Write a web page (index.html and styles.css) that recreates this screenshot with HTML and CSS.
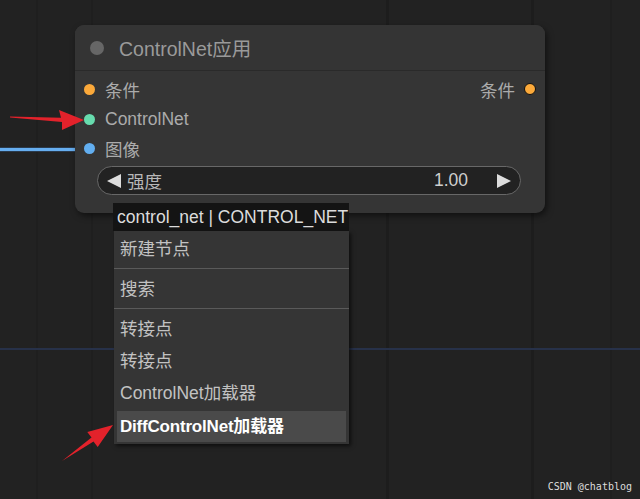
FILE: index.html
```html
<!DOCTYPE html>
<html>
<head>
<meta charset="utf-8">
<link rel="stylesheet" href="styles.css">
</head>
<body>
<div class="canvas">
  <div class="hline"></div>
  <div class="wire"></div>
  <div class="node">
    <div class="node-title">
      <span class="title-dot"></span>
      <span class="title-text">ControlNet应用</span>
    </div>
    <div class="node-body">
      <div class="slot-row">
        <div class="slot"><span class="dot dot-orange"></span><span>条件</span></div>
        <div class="slot slot-out"><span>条件</span><span class="dot dot-orange dot-out"></span></div>
      </div>
      <div class="slot-row">
        <div class="slot"><span class="dot dot-green"></span><span>ControlNet</span></div>
      </div>
      <div class="slot-row">
        <div class="slot"><span class="dot dot-blue"></span><span>图像</span></div>
      </div>
      <div class="widget">
        <span class="arrow-left"></span>
        <span class="w-label">强度</span>
        <span class="w-value">1.00</span>
        <span class="arrow-right"></span>
      </div>
    </div>
  </div>
  <div class="menu">
    <div class="menu-title">control_net | CONTROL_NET</div>
    <div class="menu-body">
      <div class="menu-item">新建节点</div>
      <div class="menu-sep"></div>
      <div class="menu-item">搜索</div>
      <div class="menu-sep"></div>
      <div class="menu-item">转接点</div>
      <div class="menu-item">转接点</div>
      <div class="menu-item">ControlNet加载器</div>
      <div class="menu-item menu-item-hl">DiffControlNet加载器</div>
    </div>
  </div>
  <svg class="arrows" width="640" height="499" viewBox="0 0 640 499">
    <polygon points="10,116.6 61,117.8 59,110 84,120 62,130 62,122 10,117.6" fill="#e3222b"/>
    <polygon points="62,461 93.5,441.5 97.7,446.9 113,425 87.3,432.1 91.5,437.5" fill="#e3222b"/>
  </svg>
  <div class="watermark">CSDN @chatblog</div>
</div>
</body>
</html>
```

FILE: styles.css
```css
html, body {
  margin: 0;
  padding: 0;
  background: #212121;
}

.canvas {
  position: relative;
  width: 640px;
  height: 499px;
  overflow: hidden;
  font-family: "Liberation Sans", "Noto Sans CJK SC", sans-serif;
  background-color: #222222;
  background-image:
    linear-gradient(to right,
      transparent 36px, #1f1f1f 36px, #1f1f1f 38px, transparent 38px,
      transparent 91px, #1f1f1f 91px, #1f1f1f 93px, transparent 93px,
      transparent 386px, #1d1d1d 386px, #1d1d1d 389px, transparent 389px,
      transparent 531px, #1d1d1d 531px, #1d1d1d 534px, transparent 534px,
      transparent 610px, #1f1f1f 610px, #1f1f1f 612px, transparent 612px);
}

.hline {
  position: absolute;
  left: 0;
  top: 348px;
  width: 640px;
  height: 2px;
  background: #273149;
}

.wire {
  position: absolute;
  left: 0;
  top: 147px;
  width: 78px;
  height: 3px;
  background: #66aef0;
  border-top: 1px solid #2a3a4c;
  border-bottom: 1px solid #2a3a4c;
}

.node {
  position: absolute;
  left: 75px;
  top: 25px;
  width: 470px;
  height: 188px;
  background: #353535;
  border-radius: 9px;
  box-shadow: 2px 3px 6px rgba(0, 0, 0, 0.5);
  display: flex;
  flex-direction: column;
}

.node-title {
  height: 45px;
  display: flex;
  align-items: center;
  padding-left: 15px;
  gap: 15px;
  border-bottom: 1px solid #2a2a2a;
  background: #343434;
  border-radius: 9px 9px 0 0;
}

.title-dot {
  width: 14px;
  height: 14px;
  border-radius: 50%;
  background: #666666;
}

.title-text {
  font-size: 19.5px;
  color: #9a9a9a;
}

.node-body {
  display: flex;
  flex-direction: column;
  padding-top: 3px;
}

.slot-row {
  height: 30px;
  display: flex;
  align-items: center;
  justify-content: space-between;
}

.slot-row:nth-child(3) {
  height: 29px;
}

.slot {
  display: flex;
  align-items: center;
  gap: 10px;
  padding-left: 9px;
  font-size: 17.5px;
  color: #ababab;
}

.slot-out {
  padding-left: 0;
  padding-right: 9px;
  gap: 9px;
}

.dot {
  width: 11px;
  height: 11px;
  border-radius: 50%;
  display: inline-block;
}

.dot-orange { background: #fba93a; }
.dot-green { background: #67dcae; }
.dot-blue { background: #62aef0; }

.dot-out {
  width: 10px;
  height: 10px;
  border: 1px solid #111111;
}

.widget {
  margin: 3px 0 0 22px;
  width: 424px;
  height: 29px;
  box-sizing: border-box;
  border: 1px solid #686868;
  border-radius: 15px;
  background: #222222;
  display: flex;
  align-items: center;
  padding: 0 9px 0 9px;
  font-size: 17.5px;
  color: #b8b8b8;
}

.arrow-left {
  width: 0;
  height: 0;
  border-top: 7px solid transparent;
  border-bottom: 7px solid transparent;
  border-right: 14px solid #dddddd;
}

.w-label {
  margin-left: 6px;
}

.w-value {
  margin-left: auto;
  color: #cfcfcf;
}

.arrow-right {
  margin-left: 29px;
  width: 0;
  height: 0;
  border-top: 7px solid transparent;
  border-bottom: 7px solid transparent;
  border-left: 14px solid #dddddd;
}

.menu {
  position: absolute;
  left: 113px;
  top: 203px;
  width: 236px;
  font-size: 17.5px;
}

.menu-title {
  height: 28px;
  line-height: 28px;
  padding-left: 4px;
  background: #141414;
  color: #dcdcdc;
  white-space: nowrap;
}

.menu-body {
  margin-left: 1px;
  width: 235px;
  background: #353535;
  padding: 2px 0 2px 0;
  box-shadow: 2px 2px 4px rgba(0, 0, 0, 0.6);
  display: flex;
  flex-direction: column;
}

.menu-item {
  height: 32px;
  line-height: 32px;
  padding-left: 6px;
  color: #c2c2c2;
  white-space: nowrap;
}

.menu-sep {
  height: 8px;
  box-sizing: border-box;
  border-bottom: 1px solid #5a5a5a;
  margin-top: -4px;
  margin-bottom: 4px;
}

.menu-item-hl {
  margin: 2px 3px 0 3px;
  height: 31px;
  line-height: 31px;
  padding-left: 3px;
  background: #4a4a4a;
  color: #ffffff;
  font-weight: bold;
  font-size: 17px;
  letter-spacing: -0.2px;
}

.arrows {
  position: absolute;
  left: 0;
  top: 0;
}

.watermark {
  position: absolute;
  right: 8px;
  bottom: 7px;
  font-family: "DejaVu Sans Mono", monospace;
  font-size: 10px;
  color: #dddddd;
}
```
